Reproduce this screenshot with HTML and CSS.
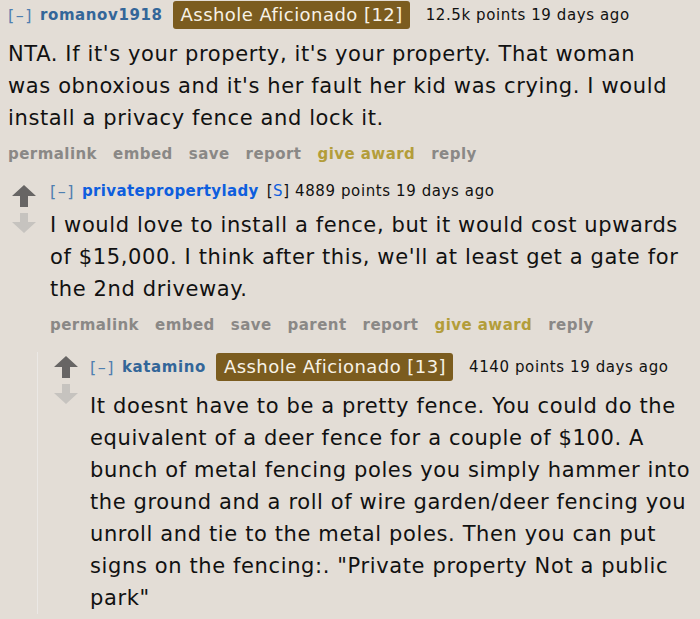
FILE: index.html
```html
<!DOCTYPE html>
<html>
<head>
<meta charset="utf-8">
<link rel="stylesheet" href="styles.css">
</head>
<body>
<div class="thread">
  <div class="comment top">
    <div class="entry">
      <div class="tagline">
        <span class="expand">[–]</span>
        <span class="author">romanov1918</span>
        <span class="flair">Asshole Aficionado [12]</span>
        <span class="meta">12.5k points 19 days ago</span>
      </div>
      <div class="md">NTA. If it's your property, it's your property. That woman was obnoxious and it's her fault her kid was crying. I would install a privacy fence and lock it.</div>
      <ul class="buttons">
        <li>permalink</li><li>embed</li><li>save</li><li>report</li><li class="award">give award</li><li>reply</li>
      </ul>
    </div>
  </div>

  <div class="comment c2">
    <div class="row">
      <div class="midcol">
        <svg class="arrow up" viewBox="0 0 24 22" width="24" height="22"><polygon points="12,0 24,11 16,11 16,22 8,22 8,11 0,11"/></svg>
        <svg class="arrow down" viewBox="0 0 24 20" width="24" height="20"><polygon points="8,0 16,0 16,9 24,9 12,20 0,9 8,9"/></svg>
      </div>
      <div class="entry">
        <div class="tagline small">
          <span class="expand">[–]</span>
          <span class="author submitter">privatepropertylady</span>
          <span class="meta"><span class="bracket">[</span><span class="s">S</span><span class="bracket">]</span> 4889 points 19 days ago</span>
        </div>
        <div class="md">I would love to install a fence, but it would cost upwards of $15,000. I think after this, we'll at least get a gate for the 2nd driveway.</div>
        <ul class="buttons">
          <li>permalink</li><li>embed</li><li>save</li><li>parent</li><li>report</li><li class="award">give award</li><li>reply</li>
        </ul>
      </div>
    </div>

    <div class="child">
      <div class="comment c3">
        <div class="row">
          <div class="midcol">
            <svg class="arrow up" viewBox="0 0 24 22" width="24" height="22"><polygon points="12,0 24,11 16,11 16,22 8,22 8,11 0,11"/></svg>
            <svg class="arrow down" viewBox="0 0 24 20" width="24" height="20"><polygon points="8,0 16,0 16,9 24,9 12,20 0,9 8,9"/></svg>
          </div>
          <div class="entry">
            <div class="tagline">
              <span class="expand">[–]</span>
              <span class="author">katamino</span>
              <span class="flair">Asshole Aficionado [13]</span>
              <span class="meta">4140 points 19 days ago</span>
            </div>
            <div class="md">It doesnt have to be a pretty fence. You could do the equivalent of a deer fence for a couple of $100. A bunch of metal fencing poles you simply hammer into the ground and a roll of wire garden/deer fencing you unroll and tie to the metal poles. Then you can put signs on the fencing:. "Private property Not a public park"</div>
          </div>
        </div>
      </div>
    </div>
  </div>
</div>
</body>
</html>
```

FILE: styles.css
```css
html, body {
  margin: 0;
  padding: 0;
  background: #e3ddd6;
}
body {
  font-family: "DejaVu Sans", Verdana, sans-serif;
  color: #111;
  width: 700px;
  height: 619px;
  overflow: hidden;
}
.thread {
  padding: 0 3px 0 8px;
}
.tagline {
  display: flex;
  align-items: center;
  height: 30px;
  font-size: 15px;
  letter-spacing: 0.6px;
  white-space: nowrap;
}
.tagline.small {
  height: 20px;
}
.expand {
  color: #4f7fb0;
  font-size: 16px;
  letter-spacing: 1.5px;
  margin-right: 7px;
}
.author {
  color: #336699;
  font-weight: bold;
  margin-right: 10px;
}
.author.submitter {
  color: #0e5ede;
  letter-spacing: 0.35px;
  margin-right: 8px;
}
.s {
  color: #0e5ede;
}
.flair {
  background: #7b5c1f;
  color: #f7f2e6;
  font-size: 18px;
  letter-spacing: 0.45px;
  height: 28px;
  line-height: 28px;
  padding: 0 7px 0 8px;
  border-radius: 3px;
  margin-right: 16px;
}
.meta {
  color: #111;
}
.md {
  font-size: 21px;
  letter-spacing: 0.62px;
  line-height: 32px;
  margin-top: 8px;
}
.top .md {
  padding-right: 24px;
}
.buttons {
  list-style: none;
  margin: 10px 0 0 0;
  padding: 0;
  display: flex;
  gap: 16px;
  font-size: 15px;
  letter-spacing: 0.45px;
  line-height: 20px;
  font-weight: bold;
  color: #8a8886;
}
.buttons .award {
  color: #b39d3a;
}
.comment.c2 {
  margin-top: 17px;
}
.row {
  display: flex;
  align-items: flex-start;
}
.midcol {
  width: 32px;
  display: flex;
  flex-direction: column;
  align-items: center;
  padding-top: 4px;
  gap: 6px;
  flex: none;
}
.arrow.up { fill: #676564; }
.arrow.down { fill: #c6c3bf; }
.c2 > .row > .entry {
  margin-left: 10px;
  flex: 1;
}
.child {
  margin-left: 29px;
  margin-top: 17px;
  border-left: 1px solid #ebe8e5;
  padding-left: 12px;
}
.c3 > .row > .entry {
  margin-left: 8px;
  flex: 1;
}
```
